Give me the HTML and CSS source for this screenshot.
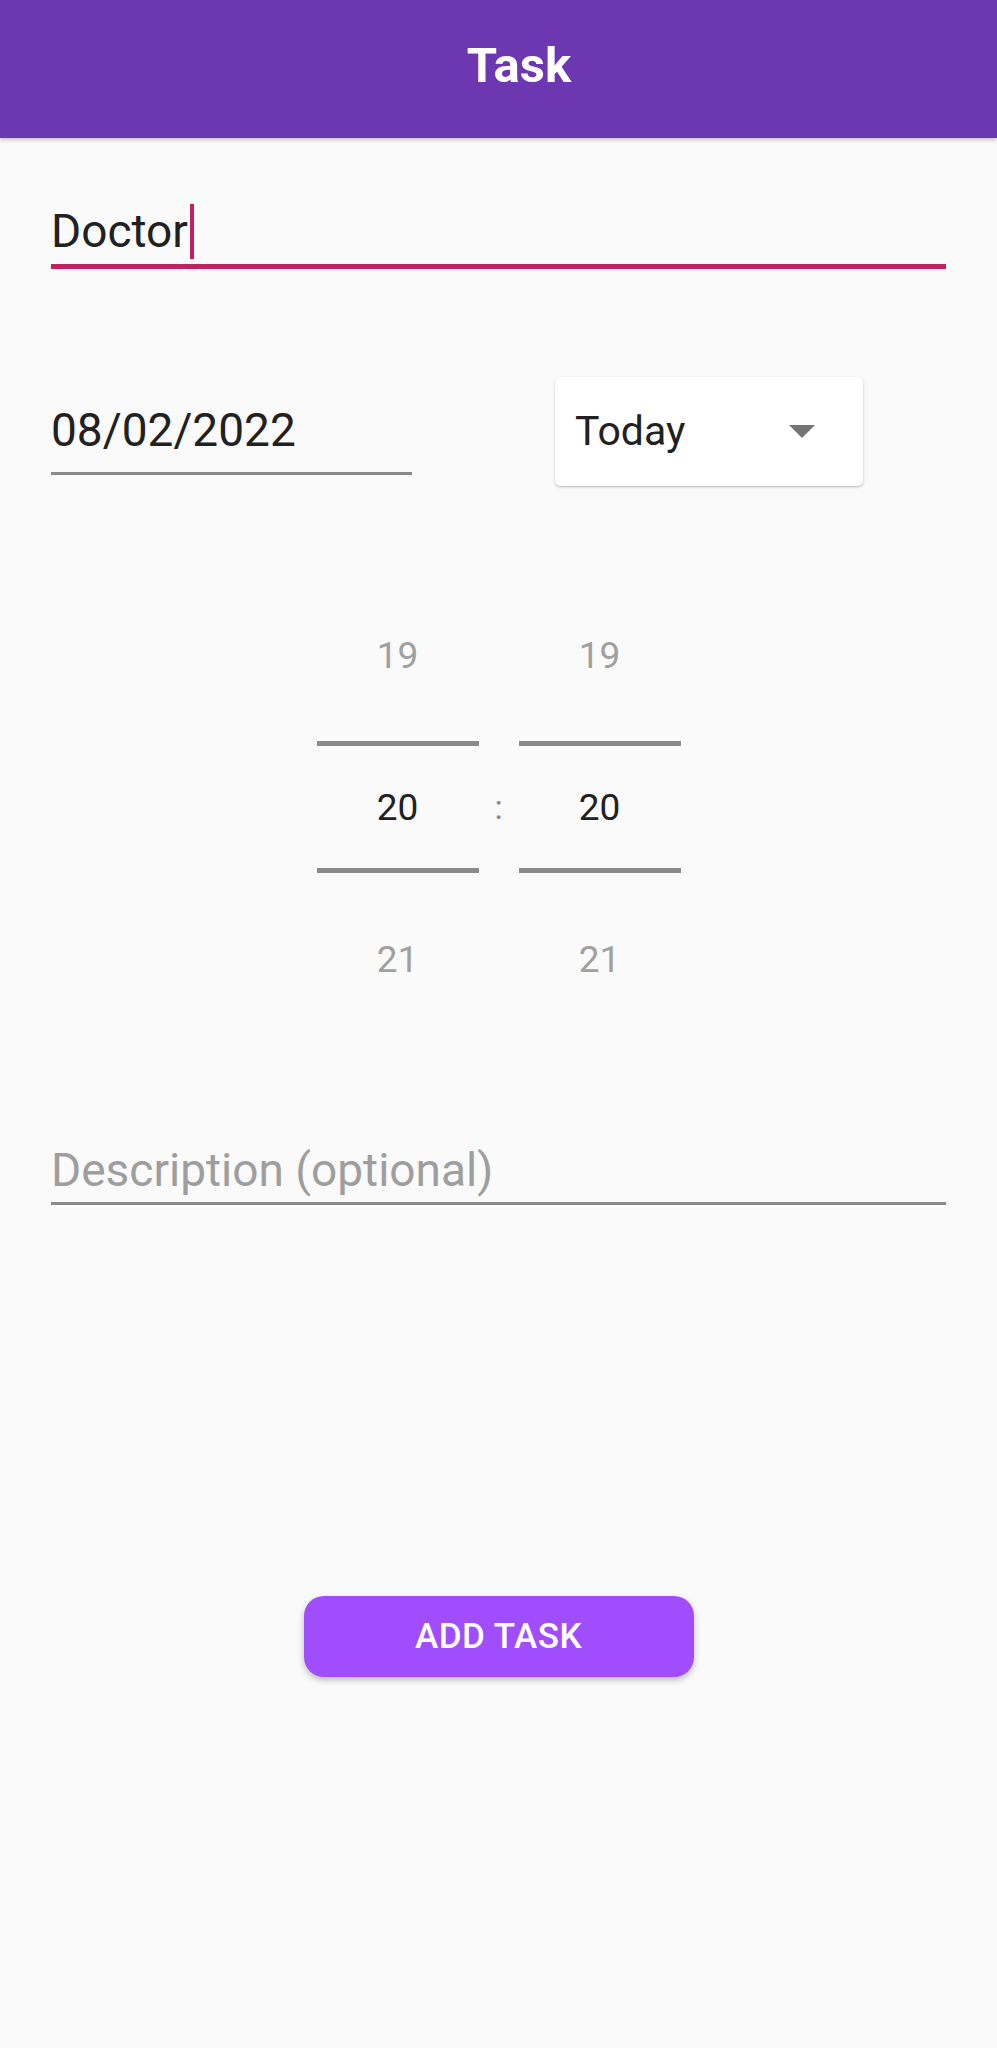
FILE: index.html
```html
<!DOCTYPE html>
<html lang="en">
<head>
<meta charset="utf-8">
<title>Task</title>
<link rel="stylesheet" href="styles.css">
</head>
<body>
<header class="appbar"><h1 class="appbar-title">Task</h1></header>
<main class="content">
  <div class="field field-focused">
    <span class="field-text">Doctor</span><span class="caret"></span>
  </div>
  <div class="date-row">
    <div class="field date-field"><span class="date-text">08/02/2022</span></div>
    <div class="dropdown">
      <span class="dropdown-text">Today</span>
      <svg class="dropdown-arrow" width="26" height="13" viewBox="0 0 26 13"><path d="M0 0H26L13 13Z" fill="#757575"/></svg>
    </div>
  </div>
  <div class="picker">
    <div class="picker-col">
      <div class="picker-item picker-outer">19</div>
      <div class="picker-divider"></div>
      <div class="picker-item picker-selected">20</div>
      <div class="picker-divider"></div>
      <div class="picker-item picker-outer">21</div>
    </div>
    <div class="picker-sep">
      <div class="picker-sep-spacer"></div>
      <div class="picker-sep-item">:</div>
    </div>
    <div class="picker-col">
      <div class="picker-item picker-outer">19</div>
      <div class="picker-divider"></div>
      <div class="picker-item picker-selected">20</div>
      <div class="picker-divider"></div>
      <div class="picker-item picker-outer">21</div>
    </div>
  </div>
  <div class="field desc-field"><span class="desc-text">Description (optional)</span></div>
  <div class="button-row"><button class="add-button">ADD TASK</button></div>
</main>
</body>
</html>
```
FILE: styles.css
```css
html, body {
  margin: 0;
  padding: 0;
}
body {
  background: #fafafa;
  font-family: Roboto, "Noto Sans", "Liberation Sans", sans-serif;
  color: #212121;
  min-height: 2048px;
}
.appbar {
  height: 138px;
  background: #6e37b2;
  box-shadow: 0 2px 4px rgba(0,0,0,0.22);
  display: flex;
  justify-content: center;
  box-sizing: border-box;
  padding-top: 41px;
  padding-left: 41px;
  position: relative;
}
.appbar-title {
  margin: 0;
  font-size: 49px;
  line-height: 1;
  font-weight: 700;
  color: #ffffff;
}
.content {
  padding: 0 51px;
}
.field-focused {
  margin-top: 66px;
  padding-bottom: 5px;
  border-bottom: 5px solid #c61f5f;
  line-height: 55px;
  font-size: 46px;
}
.field-text {
  color: #212121;
}
.caret {
  display: inline-block;
  width: 4px;
  height: 55px;
  background: #c61f5f;
  vertical-align: top;
  margin-left: 2px;
}
.date-row {
  display: flex;
  align-items: flex-start;
  gap: 143px;
  margin-top: 108px;
}
.date-field {
  width: 361px;
  margin-top: 30px;
  font-size: 46px;
  line-height: 1;
  padding-bottom: 19px;
  border-bottom: 3px solid #8a8a8a;
}
.dropdown {
  width: 308px;
  height: 109px;
  box-sizing: border-box;
  background: #ffffff;
  border-radius: 5px;
  box-shadow: 0 1px 3px rgba(0,0,0,0.2), 0 1px 1px rgba(0,0,0,0.08);
  display: flex;
  align-items: center;
  justify-content: space-between;
  padding: 0 48px 0 20px;
}
.dropdown-text {
  font-size: 41px;
  line-height: 1;
  color: #212121;
}
.dropdown-arrow {
  display: block;
}
.picker {
  display: flex;
  justify-content: center;
  margin-top: 83px;
}
.picker-col {
  width: 162px;
  display: flex;
  flex-direction: column;
}
.picker-item {
  display: flex;
  align-items: center;
  justify-content: center;
  font-size: 37px;
  line-height: 1;
}
.picker-outer {
  height: 172px;
  color: #a0a0a0;
}
.picker-selected {
  height: 122px;
  color: #212121;
}
.picker-divider {
  height: 5px;
  background: #8a8a8a;
}
.picker-sep {
  width: 40px;
  display: flex;
  flex-direction: column;
}
.picker-sep-spacer {
  height: 177px;
}
.picker-sep-item {
  height: 122px;
  display: flex;
  align-items: center;
  justify-content: center;
  font-size: 34px;
  line-height: 1;
  color: #8a8a8a;
}
.desc-field {
  margin-top: 102px;
  font-size: 46px;
  line-height: 1;
  padding-bottom: 9px;
  border-bottom: 3px solid #8a8a8a;
}
.desc-text {
  color: #9e9e9e;
}
.button-row {
  display: flex;
  justify-content: center;
  margin-top: 391px;
}
.add-button {
  width: 390px;
  height: 81px;
  border: none;
  border-radius: 20px;
  background: #a04efd;
  color: #ffffff;
  font-family: Roboto, "Noto Sans", "Liberation Sans", sans-serif;
  font-size: 35px;
  font-weight: 500;
  letter-spacing: 0.5px;
  box-shadow: 0 3px 6px rgba(0,0,0,0.25);
  padding: 0;
}
```
